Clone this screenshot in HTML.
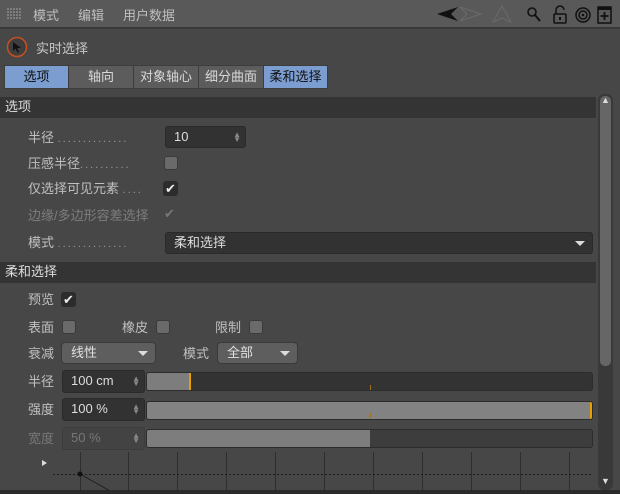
<!DOCTYPE html>
<html><head><meta charset="utf-8"><style>
*{margin:0;padding:0;box-sizing:border-box}
body{width:620px;height:494px;background:#474747;font-family:"Liberation Sans","Noto Sans CJK SC",sans-serif;font-size:13px;color:#c8c8c8;position:relative;overflow:hidden}
.a{position:absolute;white-space:nowrap}
.menu{left:0;top:0;width:620px;height:29px;background:#595959;border-bottom:2px solid #3a3a3a}
.tab{top:65px;height:24px;line-height:22px;text-align:center;color:#d8d8d8;background:#5c5c5c;border:1px solid #3d3d3d}
.tab.s{background:#7c9dd0;color:#111}
.hdr{left:0;width:596px;height:21px;background:#343434;color:#ddd;line-height:19px;padding-left:5px}
.lbl{color:#c0c0c0}
.dots{color:#9a9a9a;letter-spacing:2px;font-size:11px}
.fld{background:#323232;border:1px solid #2a2a2a;border-radius:3px;color:#ddd;line-height:20px;padding-left:8px}
.cb{width:14px;height:14px;background:#6a6a6a;border-radius:3px;border:1px solid #3a3a3a}
.cbd{width:15px;height:15px;background:#2c2c2c;border-radius:3px;color:#eee;font-size:13px;line-height:15px;text-align:center}
.dd{background:#5e5e5e;border:1px solid #3a3a3a;border-radius:4px;color:#e0e0e0;line-height:19px;padding-left:9px}
.tri{position:absolute;right:7px;top:8px;width:0;height:0;border-left:5px solid transparent;border-right:5px solid transparent;border-top:5px solid #ddd}
.arr{position:absolute;right:4px;top:5px;font-size:8px;color:#888;line-height:5px}
.sl{left:146px;width:447px;height:19px;background:#333;border:1px solid #2c2c2c;border-radius:3px;overflow:hidden}
</style></head><body>
<div class="a menu"></div>
<svg class="a" style="left:7px;top:8px" width="14" height="14"><g fill="#aaa"><circle cx="1" cy="1" r=".8"/><circle cx="4" cy="1" r=".8"/><circle cx="7" cy="1" r=".8"/><circle cx="10" cy="1" r=".8"/><circle cx="13" cy="1" r=".8"/><circle cx="1" cy="4" r=".8"/><circle cx="4" cy="4" r=".8"/><circle cx="7" cy="4" r=".8"/><circle cx="10" cy="4" r=".8"/><circle cx="13" cy="4" r=".8"/><circle cx="1" cy="7" r=".8"/><circle cx="4" cy="7" r=".8"/><circle cx="7" cy="7" r=".8"/><circle cx="10" cy="7" r=".8"/><circle cx="13" cy="7" r=".8"/><circle cx="1" cy="10" r=".8"/><circle cx="4" cy="10" r=".8"/><circle cx="7" cy="10" r=".8"/><circle cx="10" cy="10" r=".8"/><circle cx="13" cy="10" r=".8"/></g></svg>
<div class="a" style="left:33px;top:5px;color:#bfbfbf">模式</div>
<div class="a" style="left:78px;top:5px;color:#bfbfbf">编辑</div>
<div class="a" style="left:123px;top:5px;color:#bfbfbf">用户数据</div>
<svg class="a" style="left:436px;top:4px" width="184" height="22">
<path d="M1 10 L22 3 L15 10 L22 17Z" fill="#111"/>
<path d="M24 3 L45 10 L24 17 L31 10Z" fill="none" stroke="#6a6a6a"/>
<path d="M57 18 L66 2 L75 18 L66 14Z" fill="none" stroke="#6a6a6a"/>
<circle cx="96" cy="8" r="4" fill="none" stroke="#111" stroke-width="1.6"/><path d="M99 11 L104 17" stroke="#111" stroke-width="2"/>
<rect x="118" y="10" width="12" height="9" rx="1" fill="none" stroke="#111" stroke-width="1.5"/><path d="M120 10 V6 a4 4 0 0 1 8 0" fill="none" stroke="#111" stroke-width="1.5"/><rect x="123" y="13" width="2" height="3" fill="#111"/>
<circle cx="147" cy="11" r="7" fill="none" stroke="#111" stroke-width="1.5"/><circle cx="147" cy="11" r="4" fill="none" stroke="#111" stroke-width="1.5"/><circle cx="147" cy="11" r="1.3" fill="#111"/>
<rect x="162" y="3" width="13" height="16" fill="none" stroke="#111" stroke-width="1.5"/><rect x="162" y="3" width="13" height="3" fill="#111"/><path d="M168.5 8 V16 M164.5 12 H172.5" stroke="#111" stroke-width="1.8"/>
</svg>
<svg class="a" style="left:6px;top:36px" width="22" height="22"><circle cx="11" cy="11" r="9.5" fill="#3e3e3e" stroke="#c8501e" stroke-width="1.5"/><path d="M7 6 L15 12 L11 12 L13 16 L11.5 16.5 L9.5 12.5 L7 15Z" fill="#111"/></svg>
<div class="a" style="left:36px;top:38px;color:#c8c8c8">实时选择</div>
<div class="a tab s" style="left:4px;width:65px">选项</div>
<div class="a tab" style="left:68px;width:66px">轴向</div>
<div class="a tab" style="left:133px;width:66px">对象轴心</div>
<div class="a tab" style="left:198px;width:66px">细分曲面</div>
<div class="a tab s" style="left:263px;width:65px">柔和选择</div>
<div class="a hdr" style="top:97px">选项</div>
<div class="a" style="left:598px;top:94px;width:15px;height:396px;background:#393939;border-radius:6px"></div>
<div class="a" style="left:600px;top:96px;width:11px;height:270px;background:#666;border-radius:5px"></div>
<div class="a" style="left:601px;top:95px;font-size:9px;color:#ddd">▲</div>
<div class="a" style="left:601px;top:476px;font-size:9px;color:#ddd">▼</div>

<div class="a lbl" style="left:28px;top:127px">半径 <span class="dots">..............</span></div>
<div class="a fld" style="left:165px;top:126px;width:81px;height:22px">10<span class="arr">▲<br>▼</span></div>
<div class="a lbl" style="left:28px;top:153px">压感半径<span class="dots">..........</span></div>
<div class="a cb" style="left:164px;top:156px"></div>
<div class="a lbl" style="left:28px;top:178px">仅选择可见元素 <span class="dots">....</span></div>
<div class="a cbd" style="left:163px;top:181px">✔</div>
<div class="a" style="left:28px;top:205px;color:#7d7d7d">边缘/多边形容差选择</div>
<div class="a" style="left:164px;top:206px;color:#777">✔</div>
<div class="a lbl" style="left:28px;top:232px">模式 <span class="dots">..............</span></div>
<div class="a fld" style="left:165px;top:232px;width:428px;height:22px;padding-left:8px">柔和选择<span class="tri"></span></div>
<div class="a hdr" style="top:262px">柔和选择</div>

<div class="a lbl" style="left:28px;top:289px">预览</div>
<div class="a cbd" style="left:61px;top:292px">✔</div>
<div class="a lbl" style="left:28px;top:317px">表面</div><div class="a cb" style="left:62px;top:320px"></div>
<div class="a lbl" style="left:122px;top:317px">橡皮</div><div class="a cb" style="left:156px;top:320px"></div>
<div class="a lbl" style="left:215px;top:317px">限制</div><div class="a cb" style="left:249px;top:320px"></div>
<div class="a lbl" style="left:28px;top:343px">衰减</div>
<div class="a dd" style="left:61px;top:342px;width:95px;height:22px">线性<span class="tri"></span></div>
<div class="a lbl" style="left:183px;top:343px">模式</div>
<div class="a dd" style="left:217px;top:342px;width:81px;height:22px">全部<span class="tri"></span></div>

<div class="a lbl" style="left:28px;top:371px">半径</div>
<div class="a fld" style="left:62px;top:370px;width:83px;height:23px">100 cm<span class="arr">▲<br>▼</span></div>
<div class="a sl" style="top:372px"><div style="width:44px;height:100%;background:#7d7d7d;border-right:2px solid #e8a000"></div></div>
<div class="a" style="left:370px;top:385px;width:1px;height:5px;background:#a07020"></div>
<div class="a lbl" style="left:28px;top:399px">强度</div>
<div class="a fld" style="left:62px;top:398px;width:83px;height:23px">100 %<span class="arr">▲<br>▼</span></div>
<div class="a sl" style="top:401px;background:#828282"><div style="position:absolute;right:0;top:0;width:2px;height:100%;background:#e8a000"></div></div>
<div class="a" style="left:370px;top:413px;width:1px;height:5px;background:#a07020"></div>
<div class="a" style="left:28px;top:428px;color:#777">宽度</div>
<div class="a fld" style="left:62px;top:427px;width:83px;height:23px;background:#434343;border-color:#3c3c3c;color:#777">50 %<span class="arr">▲<br>▼</span></div>
<div class="a sl" style="top:429px;background:#3d3d3d"><div style="width:223px;height:100%;background:#7d7d7d"></div></div>

<svg class="a" style="left:0;top:452px" width="598" height="42">
<path d="M42 8 L47 11 L42 14Z" fill="#ddd"/>
<g stroke="#2e2e2e" stroke-width="1"><path d="M80.5 0V42M128.5 0V42M177.5 0V42M226.5 0V42M275.5 0V42M324.5 0V42M373.5 0V42M422.5 0V42M471.5 0V42M520.5 0V42M569.5 0V42"/></g>
<path d="M53 22.5 H593" stroke="#1c1c1c" stroke-dasharray="2 2"/>
<path d="M80 22 L112 40" stroke="#1c1c1c" stroke-width="1"/>
<circle cx="80" cy="22" r="2.5" fill="#111"/>
</svg>
<div class="a" style="left:0;top:490px;width:620px;height:4px;background:#2a2a2a"></div>
</body></html>
